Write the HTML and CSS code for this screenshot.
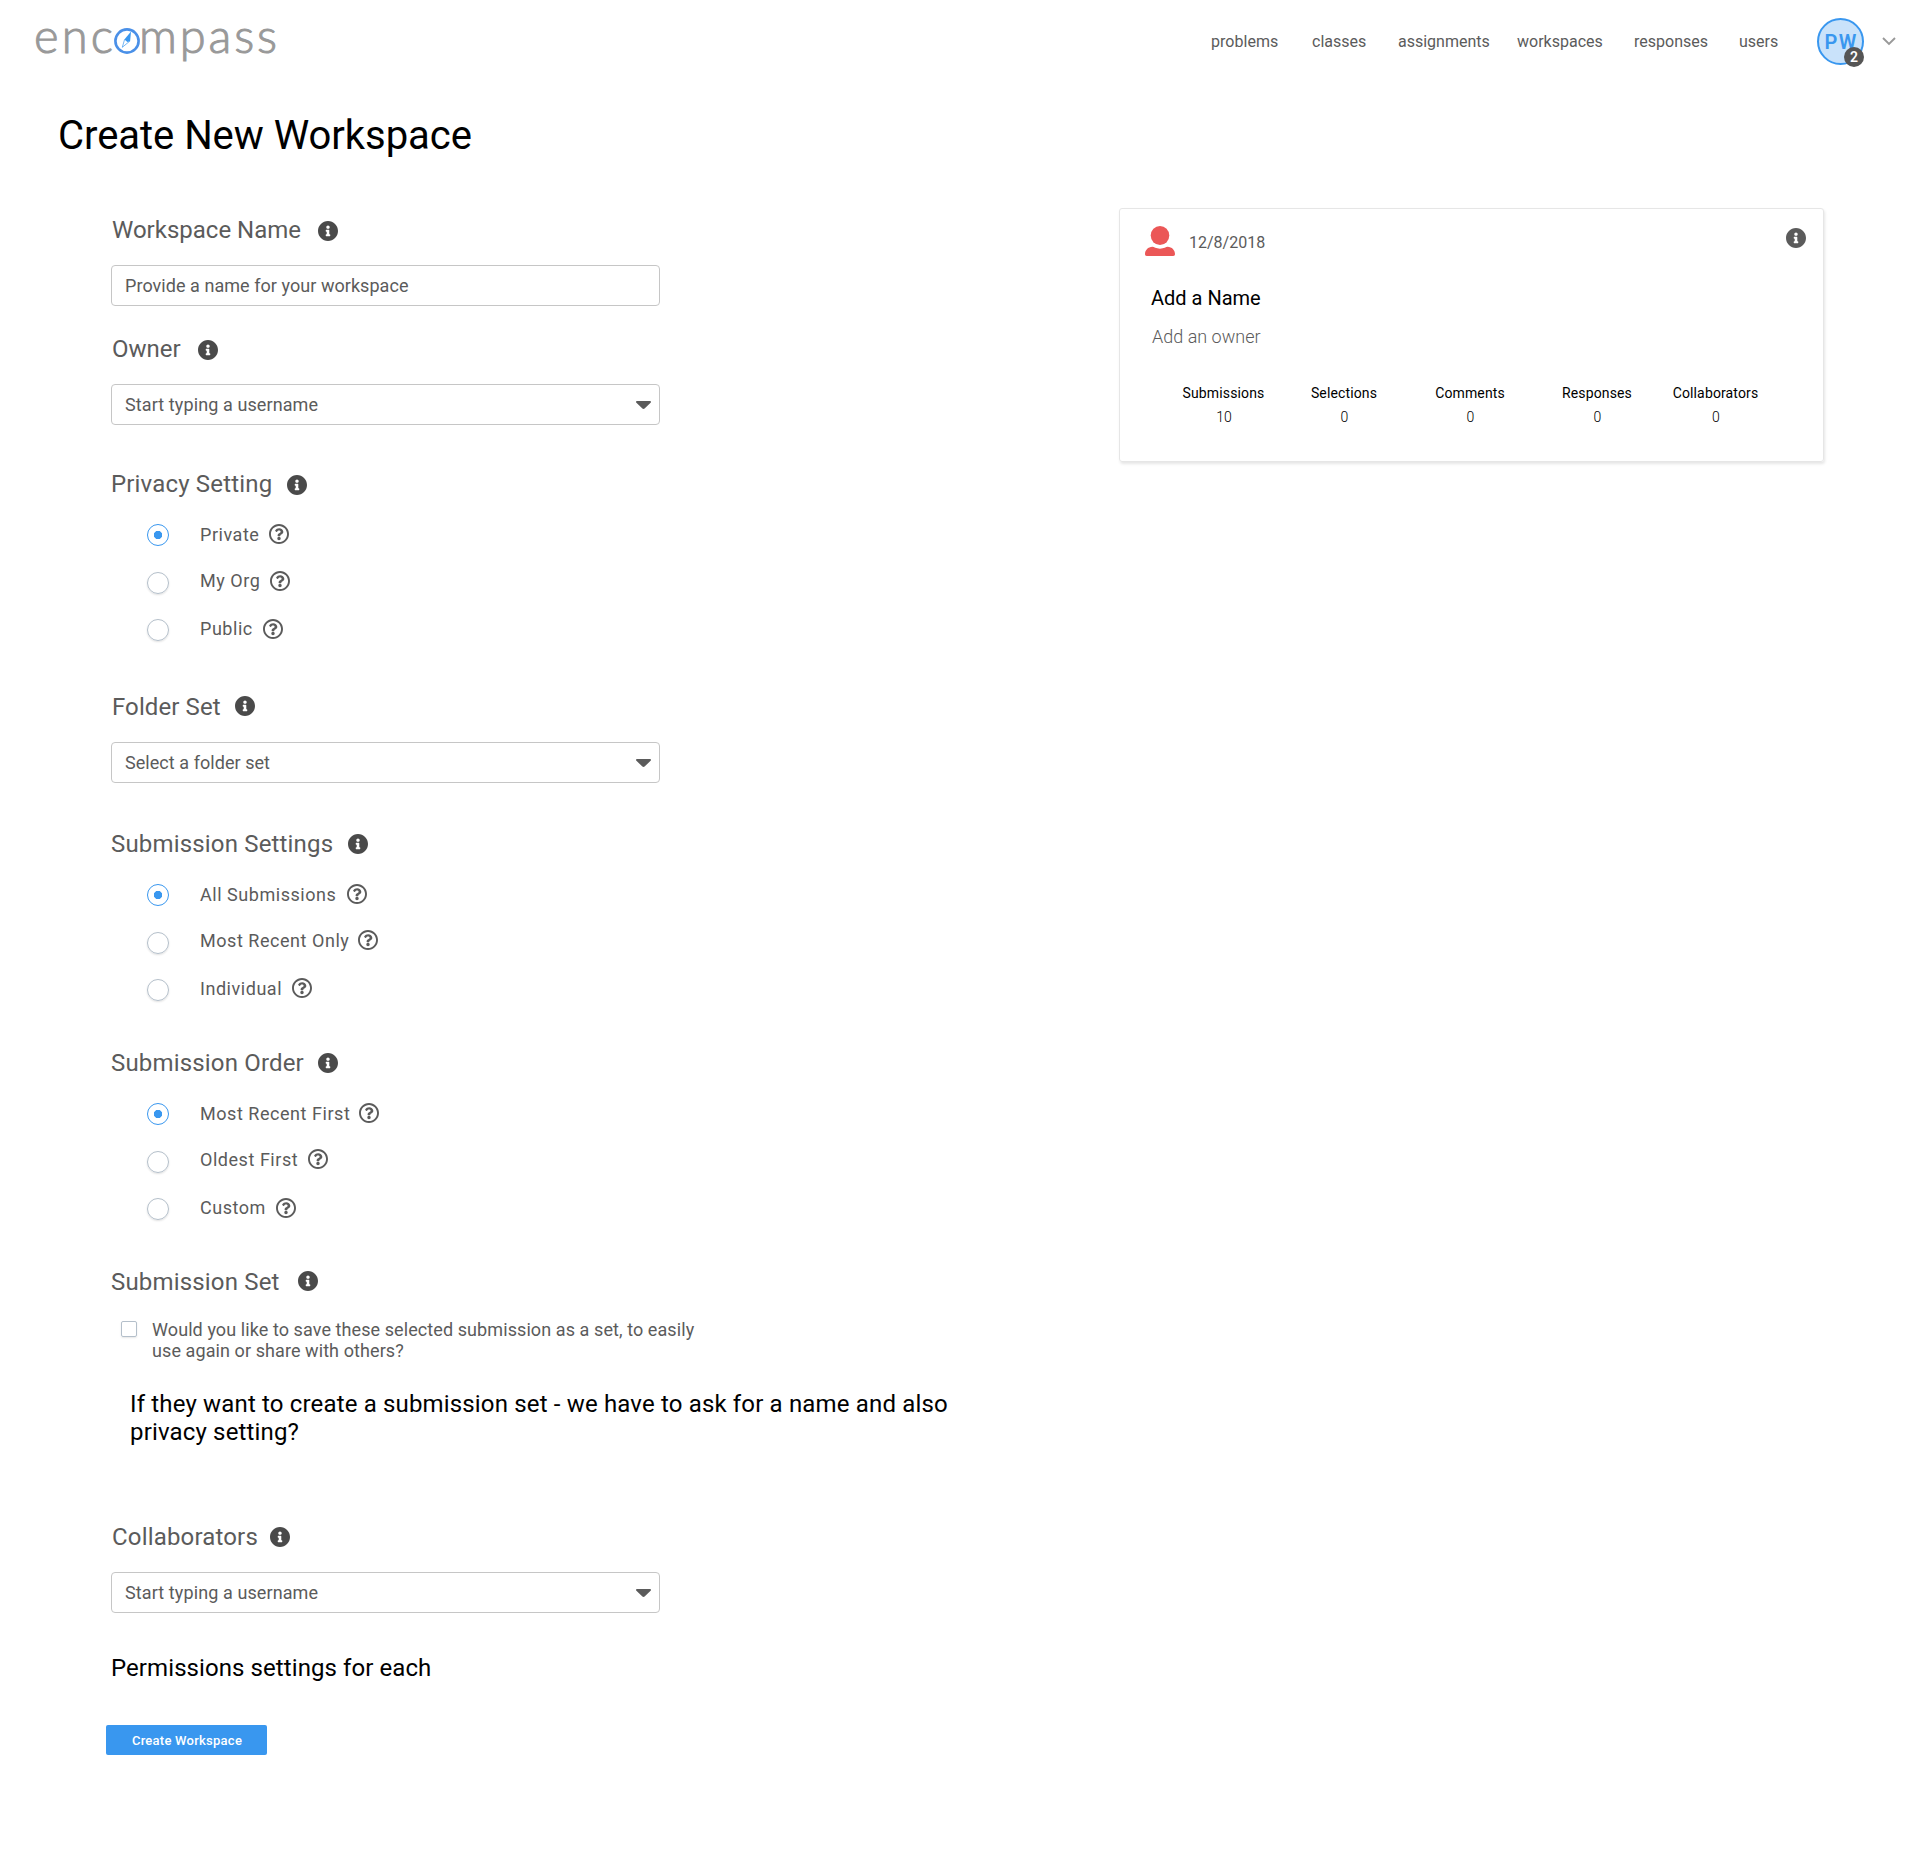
FILE: index.html
```html
<!DOCTYPE html>
<html lang="en">
<head>
<meta charset="utf-8">
<title>Create New Workspace</title>
<link rel="stylesheet" href="styles.css">
</head>
<body>
<svg class="sprite" aria-hidden="true">
  <symbol id="info" viewBox="8 8 496 496"><path d="M256 8C119.043 8 8 119.083 8 256c0 136.997 111.043 248 248 248s248-111.003 248-248C504 119.083 392.957 8 256 8zm0 110c23.196 0 42 18.804 42 42s-18.804 42-42 42-42-18.804-42-42 18.804-42 42-42zm56 254c0 6.627-5.373 12-12 12h-88c-6.627 0-12-5.373-12-12v-24c0-6.627 5.373-12 12-12h12v-64h-12c-6.627 0-12-5.373-12-12v-24c0-6.627 5.373-12 12-12h64c6.627 0 12 5.373 12 12v100h12c6.627 0 12 5.373 12 12v24z"/></symbol>
  <symbol id="help" viewBox="8 8 496 496"><path d="M256 8C119.043 8 8 119.083 8 256c0 136.997 111.043 248 248 248s248-111.003 248-248C504 119.083 392.957 8 256 8zm0 448c-110.532 0-200-89.431-200-200 0-110.495 89.472-200 200-200 110.491 0 200 89.471 200 200 0 110.53-89.431 200-200 200zm107.244-255.2c0 67.052-72.421 68.084-72.421 92.863V300c0 6.627-5.373 12-12 12h-45.647c-6.627 0-12-5.373-12-12v-8.659c0-35.745 27.1-50.034 47.579-61.516 17.561-9.845 28.324-16.541 28.324-29.579 0-17.246-21.999-28.693-39.784-28.693-23.189 0-33.894 10.977-48.942 29.969-4.057 5.12-11.46 6.071-16.666 2.124l-27.824-21.098c-5.107-3.872-6.251-11.066-2.644-16.363C184.846 131.491 214.94 112 261.794 112c49.071 0 101.45 38.304 101.45 88.8zM298 368c0 23.159-18.841 42-42 42s-42-18.841-42-42 18.841-42 42-42 42 18.841 42 42z"/></symbol>
  <symbol id="caret" viewBox="0 0 15 8"><path d="M1.2 0h12.6c1.1 0 1.5 1 .8 1.8L8.6 7.5c-.6.6-1.6.6-2.2 0L.4 1.8C-.3 1 .1 0 1.2 0z"/></symbol>
</svg>

<header class="topbar">
  <svg class="logo" width="250" height="50" viewBox="0 0 250 50" role="img" aria-label="encompass">
    <text class="logo-text" x="4" y="32.800" textLength="79">enc</text>
    <circle class="logo-ring" cx="97" cy="21" r="11.6"/>
    <path class="logo-needle" d="M101 11.500l-.9 9.700-2.700.8-3-2.600z"/>
    <path class="logo-needle-tail" d="M94.600 19.400l-2.300 7.900 7.400-6.100"/>
    <text class="logo-text" x="109" y="32.800" textLength="138">mpass</text>
  </svg>
  <nav class="nav">
    <a class="nav-problems">problems</a>
    <a class="nav-classes">classes</a>
    <a class="nav-assignments">assignments</a>
    <a class="nav-workspaces">workspaces</a>
    <a class="nav-responses">responses</a>
    <a class="nav-users">users</a>
  </nav>
  <div class="avatar">PW<span class="badge">2</span></div>
  <svg class="chevron" width="14" height="9" viewBox="0 0 14 9"><path d="M1 1l6 6 6-6"/></svg>
</header>

<h1 class="title">Create New Workspace</h1>

<main class="content">
  <form class="form">
    <section class="section name">
      <h2 class="heading inset tight">Workspace Name<svg class="info low far"><use href="#info"/></svg></h2>
      <div class="field tight">Provide a name for your workspace</div>
    </section>
    <section class="section owner">
      <h2 class="heading inset tight">Owner<svg class="info low far"><use href="#info"/></svg></h2>
      <div class="field">Start typing a username<svg class="caret"><use href="#caret"/></svg></div>
    </section>
    <section class="section privacy">
      <h2 class="heading">Privacy Setting<svg class="info low"><use href="#info"/></svg></h2>
      <div class="options">
        <label class="option"><span class="radio checked"></span>Private<svg class="help"><use href="#help"/></svg></label>
        <label class="option"><span class="radio"></span>My Org<svg class="help low"><use href="#help"/></svg></label>
        <label class="option"><span class="radio"></span>Public<svg class="help low"><use href="#help"/></svg></label>
      </div>
    </section>
    <section class="section folder">
      <h2 class="heading inset">Folder Set<svg class="info high"><use href="#info"/></svg></h2>
      <div class="field tight">Select a folder set<svg class="caret"><use href="#caret"/></svg></div>
    </section>
    <section class="section settings">
      <h2 class="heading">Submission Settings<svg class="info"><use href="#info"/></svg></h2>
      <div class="options">
        <label class="option"><span class="radio checked"></span>All Submissions<svg class="help far"><use href="#help"/></svg></label>
        <label class="option"><span class="radio"></span>Most Recent Only<svg class="help close"><use href="#help"/></svg></label>
        <label class="option"><span class="radio"></span>Individual<svg class="help"><use href="#help"/></svg></label>
      </div>
    </section>
    <section class="section order">
      <h2 class="heading">Submission Order<svg class="info"><use href="#info"/></svg></h2>
      <div class="options">
        <label class="option"><span class="radio checked"></span>Most Recent First<svg class="help close"><use href="#help"/></svg></label>
        <label class="option"><span class="radio"></span>Oldest First<svg class="help"><use href="#help"/></svg></label>
        <label class="option"><span class="radio"></span>Custom<svg class="help low"><use href="#help"/></svg></label>
      </div>
    </section>
    <section class="section set">
      <h2 class="heading">Submission Set<svg class="info high far"><use href="#info"/></svg></h2>
      <label class="save-set"><span class="checkbox"></span><span>Would you like to save these selected submission as a set, to easily<br>use again or share with others?</span></label>
      <p class="note">If they want to create a submission set - we have to ask for a name and also<br>privacy setting?</p>
    </section>
    <section class="section collaborators">
      <h2 class="heading inset">Collaborators<svg class="info near"><use href="#info"/></svg></h2>
      <div class="field">Start typing a username<svg class="caret"><use href="#caret"/></svg></div>
    </section>
    <p class="permissions">Permissions settings for each</p>
    <button class="submit" type="button">Create Workspace</button>
  </form>

  <aside class="card">
    <div class="card-top">
      <svg class="person" width="30" height="30" viewBox="0 0 30 30"><ellipse cx="15" cy="9.500" rx="9.300" ry="9.500"/><path d="M7.500 20.800c1.300 0 3.500 1.900 7.500 1.900s6.200-1.900 7.500-1.900c4.500 0 7.500 3.700 7.500 7.200 0 1.300-.5 2-1.800 2H1.800C.5 30 0 29.300 0 28c0-3.500 3-7.200 7.500-7.200z"/></svg>
      <span class="date">12/8/2018</span>
      <svg class="card-info"><use href="#info"/></svg>
    </div>
    <div class="card-name">Add a Name</div>
    <div class="card-owner">Add an owner</div>
    <dl class="stats">
      <div><dt>Submissions</dt><dd>10</dd></div>
      <div><dt>Selections</dt><dd>0</dd></div>
      <div><dt>Comments</dt><dd>0</dd></div>
      <div><dt>Responses</dt><dd>0</dd></div>
      <div><dt>Collaborators</dt><dd>0</dd></div>
    </dl>
  </aside>
</main>
</body>
</html>
```

FILE: styles.css
```css
* { box-sizing: border-box; }
body {
  margin: 0;
  min-height: 1868px;
  background: #fff;
  color: #5b5b5b;
  font-family: Roboto, "Liberation Sans", sans-serif;
}
h1, h2, p, dl, dd { margin: 0; font-weight: 400; }
svg { flex: none; }
.sprite { display: none; }

/* Top bar */
.topbar { display: flex; align-items: center; height: 82px; padding: 0 23px 0 30px; }
.logo { margin-top: 8px; overflow: visible; }
.logo-text { font-family: Lato, sans-serif; font-weight: 300; font-size: 47px; fill: #999; stroke: #999; stroke-width: 1; }
.logo-ring { fill: none; stroke: #4a90e8; stroke-width: 2.6; }
.logo-needle { fill: #3997ef; }
.logo-needle-tail { fill: none; stroke: #3997ef; stroke-width: .7; }
.nav { display: flex; margin: 2px 0 0 auto; font-size: 16px; line-height: 20px; }
.nav-problems { width: 101px; letter-spacing: .05px; }
.nav-classes { width: 86px; }
.nav-assignments { width: 119px; }
.nav-workspaces { width: 117px; }
.nav-responses { width: 105px; }
.nav-users { width: 78px; }
.avatar {
  position: relative;
  display: flex;
  align-items: center;
  justify-content: center;
  width: 47px;
  height: 47px;
  margin-top: 1px;
  padding: 1px 0 0 1px;
  border: 2px solid #3997ef;
  border-radius: 50%;
  background: #c9e2fa;
  color: #3997ef;
  font-size: 20px;
  font-weight: 600;
  letter-spacing: 1.2px;
}
.badge {
  position: absolute;
  right: -2px;
  bottom: -4px;
  width: 20px;
  height: 20px;
  border-radius: 50%;
  background: #555;
  color: #fff;
  font-size: 14px;
  line-height: 21px;
  letter-spacing: 0;
  text-align: center;
}
.chevron { margin-left: 18px; margin-right: 1px; fill: none; stroke: #999; stroke-width: 1.9; }

.title { margin: 25px 0 0 58px; color: #000; font-size: 40px; line-height: 58px; letter-spacing: -.04px; }

/* Form column */
.content { display: flex; align-items: flex-start; padding: 43px 96px 0 106px; }
.form { width: 1013px; padding: 8px 0 0 5px; }
.heading { display: flex; align-items: center; height: 28px; font-size: 24px; line-height: 28px; letter-spacing: .17px; }
.heading.inset { padding-left: 1px; }
.heading.tight { letter-spacing: 0; }
.info { width: 20px; height: 20px; margin-left: 15px; fill: #4a4a4a; }
.info.far { margin-left: 18px; }
.tight .info.far { margin-left: 17px; }
.info.near { margin-left: 12px; }
.info.low { margin-top: 2px; }
.info.high { margin-bottom: 2px; }
.folder .heading { letter-spacing: .1px; }
.folder .info,
.order .info { margin-left: 14px; }
.field {
  display: flex;
  align-items: center;
  width: 549px;
  height: 41px;
  margin-top: 21px;
  padding: 0 8px 0 13px;
  border: 1px solid #c6c6c6;
  border-radius: 4px;
  font-size: 18px;
  letter-spacing: .1px;
}
.field.tight { letter-spacing: .05px; }
.caret { width: 15px; height: 8px; margin-left: auto; fill: #5b5b5b; }
.owner { margin-top: 29px; }
.privacy { margin-top: 45px; }
.folder { margin-top: 52px; }
.settings { margin-top: 47px; }
.order, .set { margin-top: 48px; }
.collaborators { margin-top: 77px; }

.options { display: grid; grid-template-rows: 46px 48px 24px; padding: 25px 0 0 36px; }
.option { display: flex; align-items: flex-start; height: 24px; font-size: 18px; line-height: 24px; letter-spacing: .54px; }
.radio {
  width: 22px;
  height: 22px;
  margin: 1px 31px 0 0;
  border: 1.5px solid #b4bfca;
  border-radius: 50%;
  box-shadow: 0 1px 2px rgba(0, 0, 0, .12);
}
.option:nth-child(2) .radio { margin-top: 3px; }
.option:nth-child(3) .radio { margin-top: 2px; }
.radio.checked { border-color: #3997ef; background: radial-gradient(circle, #3997ef 3.800px, #fff 4.500px); box-shadow: none; }
.help { width: 20px; height: 20px; margin: 1px 0 0 10px; fill: #5b5b5b; }
.help.low { margin-top: 2px; }
.help.close { margin-left: 9px; }
.help.far { margin-left: 11px; }

.save-set { display: flex; margin: 23px 0 0 10px; font-size: 18px; line-height: 21px; letter-spacing: .085px; }
.checkbox {
  width: 16px;
  height: 16px;
  margin: 2px 15px 0 0;
  border: 1px solid #b4bfca;
  border-radius: 2px;
  box-shadow: 0 1px 2px rgba(0, 0, 0, .1);
}
.note { margin: 29px 0 0 19px; color: #000; font-size: 24px; line-height: 28px; letter-spacing: .16px; }
.permissions { margin-top: 41px; color: #000; font-size: 24px; line-height: 28px; letter-spacing: .08px; }
.submit {
  display: block;
  width: 161px;
  height: 30px;
  margin: 43px 0 0 -5px;
  padding: 1px 0 0 1px;
  border: 0;
  border-radius: 2px;
  background: #3997ef;
  color: #fff;
  font: 500 13px/29px Roboto, sans-serif;
  letter-spacing: .25px;
}

/* Preview card */
.card {
  width: 705px;
  height: 254px;
  border: 1px solid #e6e6e6;
  border-radius: 3px;
  box-shadow: 1px 2px 3px rgba(0, 0, 0, .1);
}
.card-top { display: flex; align-items: flex-start; padding: 17px 17px 0 25px; }
.person { fill: #eb5757; }
.date { margin: 7px 0 0 14px; font-size: 16px; line-height: 20px; }
.card-info { width: 20px; height: 20px; margin: 2px 0 0 auto; fill: #5b5b5b; }
.card-name { margin: 30px 0 0 31px; color: #000; font-size: 20px; line-height: 24px; }
.card-owner { margin: 15px 0 0 32px; color: #5b5b5b; font-size: 18px; font-weight: 300; line-height: 24px; }
.stats { display: grid; grid-template-columns: 121px 120px 132px 122px 115px; margin: 34px 0 0 43px; color: #000; font-size: 14px; line-height: 20px; text-align: center; }
.stats dt { letter-spacing: .14px; }
.stats dd { margin-top: 4px; padding-left: 1px; font-weight: 300; }
```
